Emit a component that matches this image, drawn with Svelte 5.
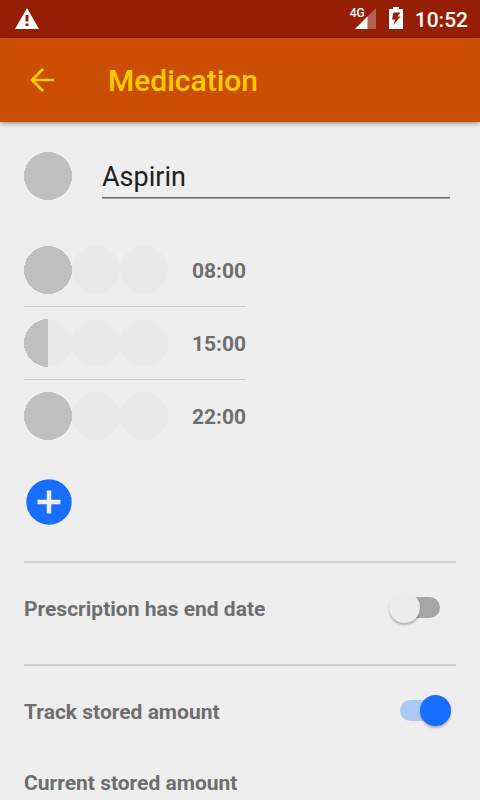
<script>
	let name = $state('Aspirin');
	let hasEndDate = $state(false);
	let trackAmount = $state(true);

	// how much of each pill is taken: 1 = whole, 0.5 = half, 0 = none
	let intakes = $state([
		{ time: '08:00', pills: [1, 0, 0] },
		{ time: '15:00', pills: [0.5, 0, 0] },
		{ time: '22:00', pills: [1, 0, 0] }
	]);

	function addIntake() {
		intakes.push({ time: '12:00', pills: [1, 0, 0] });
	}
</script>

{#snippet pill(amount)}
	<svg class="pill" viewBox="0 0 48 48" aria-hidden="true">
		<circle cx="24" cy="24" r="24" fill="#eaeaea" />
		{#if amount === 1}
			<circle cx="24" cy="24" r="24" fill="#c0c0c0" />
		{:else if amount > 0}
			<path d="M24 0a24 24 0 0 0 0 48z" fill="#c0c0c0" />
		{/if}
	</svg>
{/snippet}

<div class="status-bar">
	<svg class="warning" width="24" height="21" viewBox="0 0 24 21" aria-hidden="true">
		<path fill="#fff" fill-rule="evenodd" d="M12 0L24 21H0zM10.500 7v6.500h3V7zM10.500 15.500V18h3v-2.500z" />
	</svg>
	<div class="status-right">
		<span class="network">4G</span>
		<svg class="signal" width="21" height="21" viewBox="0 0 21 21" aria-hidden="true">
			<path d="M21 0v21H0z" fill="#fff" opacity="0.3" />
			<path d="M12.500 8.500V21H0z" fill="#fff" />
		</svg>
		<svg class="battery" width="14" height="22" viewBox="0 0 14 22" aria-hidden="true">
			<path fill="#fff" fill-rule="evenodd" d="M4 0h6v2h4v20H0V2h4zM4.500 5.500L3 12.500h3.500L4 18.500l7.500-9H8.500l3-4z" />
		</svg>
		<span class="clock">10:52</span>
	</div>
</div>

<header class="app-bar">
	<button class="back-btn" aria-label="Back">
		<svg width="24" height="24" viewBox="0 0 24 24">
			<path d="M24 12H2M13 1L2 12l11 11" fill="none" stroke="#fc0" stroke-width="2.700" />
		</svg>
	</button>
	<h1>Medication</h1>
</header>

<main>
	<div class="name-row">
		{@render pill(1)}
		<input class="name-input" type="text" aria-label="Name" bind:value={name} />
	</div>

	<ul class="intakes">
		{#each intakes as intake}
			<li>
				<div class="pills">
					{#each intake.pills as amount}
						{@render pill(amount)}
					{/each}
				</div>
				<span class="time">{intake.time}</span>
			</li>
		{/each}
	</ul>

	<button class="add-btn" aria-label="Add intake" onclick={addIntake}>
		<svg width="46" height="46" viewBox="0 0 46 46">
			<circle cx="23" cy="23" r="22.700" fill="#186eff" />
			<path d="M23 11.500v23M11.500 23h23" stroke="#eee" stroke-width="4.500" />
		</svg>
	</button>

	<section>
		<div class="setting">
			<label for="end-date">Prescription has end date</label>
			<input id="end-date" class="switch" type="checkbox" role="switch" bind:checked={hasEndDate} />
		</div>
	</section>

	<section>
		<div class="setting">
			<label for="track-amount">Track stored amount</label>
			<input id="track-amount" class="switch" type="checkbox" role="switch" bind:checked={trackAmount} />
		</div>
		{#if trackAmount}
			<div class="stored">Current stored amount</div>
		{/if}
	</section>
</main>

<style>
	:global(body) {
		background: #eee;
		font-family: Roboto, 'Liberation Sans', sans-serif;
		color: #6e6e6e;
	}
	svg {
		display: block;
		flex: none;
	}
	button {
		padding: 0;
		border: none;
		background: none;
		cursor: pointer;
	}
	.status-bar {
		display: flex;
		justify-content: space-between;
		align-items: center;
		height: 38px;
		padding: 0 12px 0 15px;
		background: #961e04;
		color: #fff;
	}
	.warning {
		margin-bottom: 2px;
	}
	.status-right {
		display: flex;
		align-items: center;
	}
	.network {
		align-self: flex-start;
		padding-top: 1px;
		font-size: 12px;
		font-weight: 500;
		line-height: 12px;
	}
	.signal {
		margin: 0 13px 2px -10px;
	}
	.battery {
		margin: 0 12px 2px 0;
	}
	.clock {
		padding-top: 2px;
		font-size: 21px;
		font-weight: 500;
		line-height: 24px;
	}
	.app-bar {
		display: flex;
		align-items: center;
		gap: 54px;
		height: 84px;
		padding: 0 30px;
		background: #cb4e04;
		color: #fc0;
		box-shadow: 0 1px 5px rgba(0, 0, 0, 0.45);
	}
	h1 {
		margin: 0;
		padding-top: 2px;
		font-size: 30px;
		font-weight: 500;
		line-height: 36px;
	}
	main {
		padding: 30px 24px 0;
	}
	.pill {
		width: 48px;
		height: 48px;
		shape-rendering: crispEdges;
	}
	.name-row {
		display: flex;
		align-items: center;
		gap: 30px;
		padding-right: 6px;
	}
	.name-input {
		flex: 1;
		min-width: 0;
		height: 46px;
		box-sizing: border-box;
		padding: 2px 0 0;
		border: none;
		border-bottom: 1px solid #a0a0a0;
		border-radius: 0;
		box-shadow: inset 0 -1px #6e6e6e;
		outline: none;
		background: none;
		color: #212121;
		font-family: inherit;
		font-size: 27px;
	}
	.intakes {
		width: fit-content;
		margin: 34px 0 24px;
		padding: 0;
		list-style: none;
	}
	.intakes li {
		display: flex;
		align-items: center;
		gap: 24px;
		padding: 12px 0;
	}
	.intakes li + li {
		border-top: 1px solid #cfcfcf;
	}
	.pills {
		display: flex;
	}
	.time,
	label,
	.stored {
		padding-top: 2px;
		font-size: 21px;
		font-weight: 700;
		line-height: 24px;
	}
	.add-btn {
		display: block;
		margin-bottom: 33px;
		padding: 3px 2px;
	}
	section {
		padding: 24px 0 36px;
		border-top: 2px solid #d0d0d0;
	}
	.setting {
		display: flex;
		justify-content: space-between;
		align-items: center;
		height: 41px;
		padding-right: 16px;
	}
	.switch {
		appearance: none;
		position: relative;
		width: 40px;
		height: 21px;
		margin: 0;
		border-radius: 11px;
		background: #a6a6a6;
		cursor: pointer;
	}
	.switch::before {
		content: '';
		position: absolute;
		top: -5px;
		left: -11px;
		width: 31px;
		height: 31px;
		border-radius: 50%;
		background: #ececec;
		box-shadow: 0 2px 2px rgba(0, 0, 0, 0.25);
	}
	.switch:checked {
		background: #adc8f3;
	}
	.switch:checked::before {
		left: 20px;
		background: #186eff;
	}
	.stored {
		margin-top: 38px;
	}
</style>
